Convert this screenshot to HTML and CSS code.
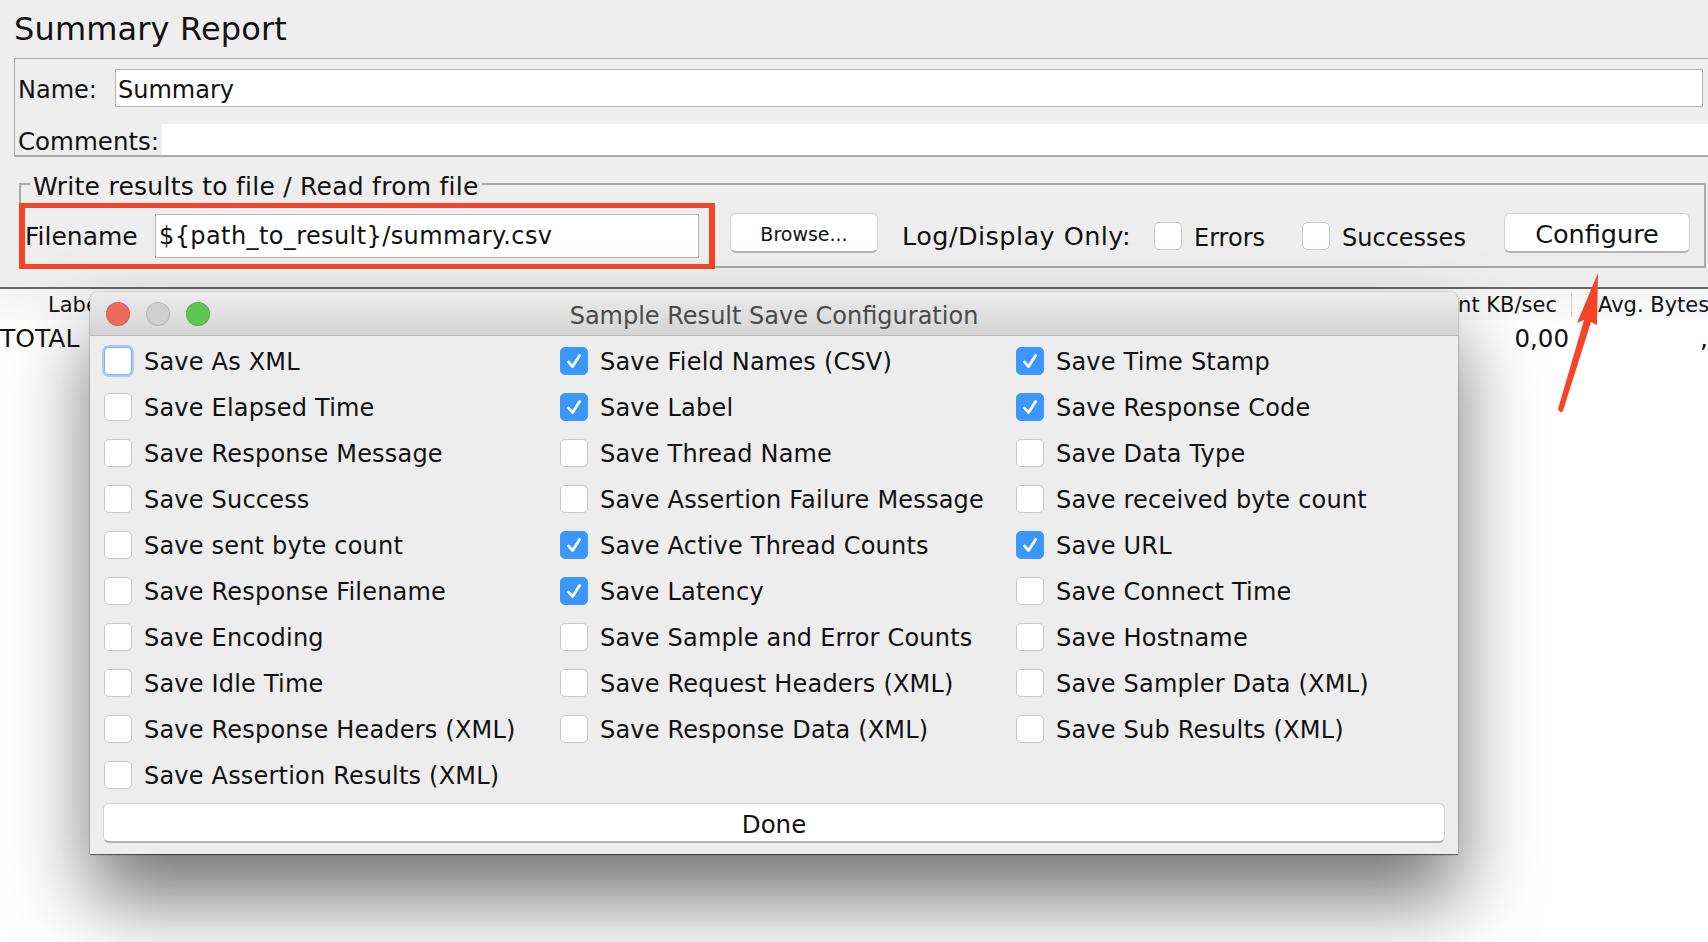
FILE: index.html
```html
<!DOCTYPE html>
<html lang="en">
<head>
<meta charset="utf-8">
<title>Summary Report</title>
<link rel="stylesheet" href="styles.css">
</head>
<body>
<div class="top">
  <h1 class="title">Summary Report</h1>
  <section class="names">
    <div class="name-row"><span class="name-label">Name:</span><div class="field name-field">Summary</div></div>
    <div class="comments-row"><span class="comments-label">Comments:</span><div class="comments-field"></div></div>
  </section>
  <fieldset class="fileset">
    <legend class="file-legend">Write results to file / Read from file</legend>
    <div class="file-row">
      <div class="file-group"><span class="file-label">Filename</span><div class="field file-field">${path_to_result}/summary.csv</div></div>
      <div class="btn browse">Browse...</div>
      <span class="log-label">Log/Display Only:</span>
      <span class="box top-box"></span><span class="top-check-label errors">Errors</span>
      <span class="box top-box succ-box"></span><span class="top-check-label">Successes</span>
      <div class="btn configure">Configure</div>
    </div>
  </fieldset>
</div>
<div class="thead"><span class="th-label">Label</span><span class="th-sent">Sent KB/sec</span><span class="th-sep"></span><span class="th-avg">Avg. Bytes</span></div>
<div class="trow"><span>TOTAL</span><span class="cell-kb">0,00</span><span class="cell-last">,</span></div>

<div class="dialog">
  <header class="titlebar">
    <span class="light red"></span><span class="light grey"></span><span class="light green"></span>
    <span class="dialog-title">Sample Result Save Configuration</span>
  </header>
  <div class="options">
    <label class="opt"><span class="box focus"></span>Save As XML</label>
    <label class="opt"><span class="box on"><svg viewBox="0 0 28 28"><path d="M8 15l4.500 5L20 8"/></svg></span>Save Field Names (CSV)</label>
    <label class="opt"><span class="box on"><svg viewBox="0 0 28 28"><path d="M8 15l4.500 5L20 8"/></svg></span>Save Time Stamp</label>
    <label class="opt"><span class="box"></span>Save Elapsed Time</label>
    <label class="opt"><span class="box on"><svg viewBox="0 0 28 28"><path d="M8 15l4.500 5L20 8"/></svg></span>Save Label</label>
    <label class="opt"><span class="box on"><svg viewBox="0 0 28 28"><path d="M8 15l4.500 5L20 8"/></svg></span>Save Response Code</label>
    <label class="opt"><span class="box"></span>Save Response Message</label>
    <label class="opt"><span class="box"></span>Save Thread Name</label>
    <label class="opt"><span class="box"></span>Save Data Type</label>
    <label class="opt"><span class="box"></span>Save Success</label>
    <label class="opt"><span class="box"></span>Save Assertion Failure Message</label>
    <label class="opt"><span class="box"></span>Save received byte count</label>
    <label class="opt"><span class="box"></span>Save sent byte count</label>
    <label class="opt"><span class="box on"><svg viewBox="0 0 28 28"><path d="M8 15l4.500 5L20 8"/></svg></span>Save Active Thread Counts</label>
    <label class="opt"><span class="box on"><svg viewBox="0 0 28 28"><path d="M8 15l4.500 5L20 8"/></svg></span>Save URL</label>
    <label class="opt"><span class="box"></span>Save Response Filename</label>
    <label class="opt"><span class="box on"><svg viewBox="0 0 28 28"><path d="M8 15l4.500 5L20 8"/></svg></span>Save Latency</label>
    <label class="opt"><span class="box"></span>Save Connect Time</label>
    <label class="opt"><span class="box"></span>Save Encoding</label>
    <label class="opt"><span class="box"></span>Save Sample and Error Counts</label>
    <label class="opt"><span class="box"></span>Save Hostname</label>
    <label class="opt"><span class="box"></span>Save Idle Time</label>
    <label class="opt"><span class="box"></span>Save Request Headers (XML)</label>
    <label class="opt"><span class="box"></span>Save Sampler Data (XML)</label>
    <label class="opt"><span class="box"></span>Save Response Headers (XML)</label>
    <label class="opt"><span class="box"></span>Save Response Data (XML)</label>
    <label class="opt"><span class="box"></span>Save Sub Results (XML)</label>
    <label class="opt"><span class="box"></span>Save Assertion Results (XML)</label>
  </div>
  <div class="btn done">Done</div>
</div>

<svg class="arrow" viewBox="0 0 60 150" aria-hidden="true"><path d="M8 144 L34 55 L27 58 L48 8 L47 60 L41 57 L13 146 Q9.500 149 8 144Z"/></svg>
</body>
</html>
```
FILE: styles.css
```css
* { box-sizing: border-box; }
html, body { margin: 0; height: 942px; overflow: hidden; background: #fff; }
body { position: relative; font-family: "DejaVu Sans", sans-serif; font-size: 24px; color: #111; }

.top { height: 289px; background: #eee; border-bottom: 2px solid #666; }
.title { margin: 0; height: 58px; padding: 8px 0 0 14px; font-size: 32px; line-height: 42px; font-weight: 400; letter-spacing: .15px; }

.names { margin-left: 14px; height: 99px; border: 1px solid #aaa; border-right: 0; border-bottom-width: 2px; }
.name-row { display: flex; align-items: center; margin-top: 10px; height: 38px; padding-left: 3px; padding-right: 5px; }
.name-label { width: 97px; padding-top: 4px; }
.field { background: #fff; border: 1px solid #b4b4b4; display: flex; align-items: center; padding-left: 2px; }
.name-field { flex: 1; height: 38px; padding-top: 4px; }
.comments-row { display: flex; align-items: center; margin-top: 17px; height: 31px; padding-left: 3px; }
.comments-label { width: 144px; padding-top: 4px; font-size: 24.500px; white-space: nowrap; }
.comments-field { flex: 1; align-self: stretch; background: #fff; }

.fileset { margin: 12px 2px 0 19px; padding: 0; min-width: 0; height: 99px; border: 2px solid #a8a8a8; }
.file-legend { margin-left: 9px; padding: 0 3px; height: 30px; line-height: 36px; font-size: 25px; letter-spacing: .25px; }
.file-row { display: flex; align-items: flex-start; margin: 4px 0 0 -2px; height: 66px; }
.file-group { display: flex; align-items: center; width: 696px; height: 66px; border: 5px solid #f44528; border-width: 5px 6px; padding-right: 10px; }
.file-label { width: 130px; font-size: 25px; white-space: nowrap; }
.file-field { flex: 1; height: 44px; padding-left: 3px; letter-spacing: .4px; white-space: nowrap; }

.btn { display: flex; align-items: center; justify-content: center; background: #fff; border: 1px solid #d2d2d2; border-bottom: 2px solid #b4b4b4; border-radius: 6px; }
.browse { width: 148px; height: 40px; margin: 10px 0 0 15px; padding-top: 2px; font-size: 19px; }
.log-label { margin: 18px 0 0 24px; width: 252px; font-size: 25.500px; letter-spacing: .45px; white-space: nowrap; }
.box { flex: none; display: block; width: 28px; height: 28px; background: #fff; border: 1px solid #c8c8c8; border-radius: 5px; }
.top-box { margin-top: 19px; }
.top-check-label { margin: 21px 0 0 12px; }
.errors { width: 108px; }
.configure { width: 186px; height: 40px; margin: 10px 14px 0 auto; padding-top: 3px; font-size: 25.500px; }

.thead { display: flex; align-items: center; height: 31px; padding-left: 48px; font-size: 21px; background: linear-gradient(#f4f4f4, #fafafa); overflow: hidden; white-space: nowrap; }
.th-sent { margin-left: auto; }
.th-sep { flex: none; width: 1px; height: 24px; margin: 0 26px 0 14px; background: #ccc; }
.th-avg { flex: none; width: 110px; }
.trow { display: flex; align-items: center; height: 36px; padding-top: 1px; font-size: 25px; }
.cell-kb { margin-left: auto; font-size: 24.500px; }
.cell-last { margin-left: 131px; }

.dialog { position: absolute; left: 90px; top: 292px; width: 1368px; height: 562px; background: #ededed; border-radius: 8px 8px 0 0; box-shadow: 0 45px 80px rgba(0,0,0,.55), 0 1px 1px rgba(0,0,0,.5), 0 0 2px rgba(0,0,0,.35); }
.titlebar { position: relative; display: flex; align-items: center; gap: 16px; height: 44px; padding-left: 16px; border-bottom: 1px solid #b9b9b9; border-radius: 8px 8px 0 0; background: linear-gradient(#ececec, #d4d4d4); }
.light { width: 24px; height: 24px; border-radius: 50%; border: 1px solid rgba(0,0,0,.12); }
.red { background: #ee6a5f; }
.grey { background: #cecece; }
.green { background: #5fc454; }
.dialog-title { position: absolute; left: 0; right: 0; top: 0; line-height: 48px; text-align: center; color: #4a4a4a; font-size: 24px; }
.options { display: grid; grid-template-columns: repeat(3, 456px); grid-auto-rows: 46px; padding: 3px 0 0 14px; letter-spacing: .2px; margin-bottom: -2px; }
.opt { display: flex; align-items: center; gap: 12px; white-space: nowrap; }
.opt .box { margin-bottom: 2px; }
.focus { border: 1px solid #7fb1ea; box-shadow: 0 0 0 2px #a9ccf3; }
.on { background: #3c97fd; border-color: #3c97fd; }
.on svg { display: block; width: 26px; height: 26px; fill: none; stroke: #fff; stroke-width: 3; stroke-linecap: round; stroke-linejoin: round; }
.done { margin: 6px 0 0 13px; width: 1342px; height: 40px; padding-top: 3px; font-size: 24.500px; }

.arrow { position: absolute; left: 1550px; top: 265px; width: 60px; height: 150px; fill: #f44528; }
```
